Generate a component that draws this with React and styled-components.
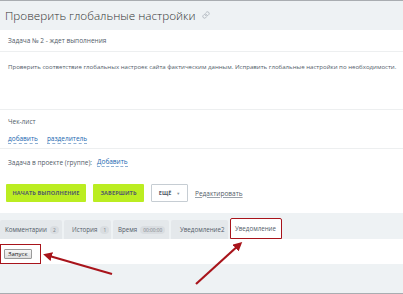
import React from "react";
import styled, { createGlobalStyle } from "styled-components";

const Global = createGlobalStyle`
  html, body { margin: 0; padding: 0; background: #fff; }
  body { font-family: "Open Sans", "Liberation Sans", sans-serif; color: #333; }
  * { box-sizing: border-box; }
`;

const Page = styled.div`
  position: relative;
  width: 403px;
  height: 294px;
  overflow: hidden;
  border-top: 1px solid #a9adb1;
  border-bottom: 1px solid #a9adb1;
  background: #eef2f4;
  display: flex;
  flex-direction: column;
`;

const Header = styled.div`
  height: 29px;
  display: flex;
  align-items: center;
  gap: 6px;
  padding: 0 0 2px 5px;
  background: #eef2f4;
`;

const Title = styled.h1`
  margin: 0;
  font-size: 11.7px;
  font-weight: 300;
  color: #333;
`;

const Card = styled.div`
  background: #fff;
  display: flex;
  flex-direction: column;
`;

const Row = styled.div`
  padding: ${(p) => p.$pad || "0 8px"};
  height: ${(p) => p.$h}px;
  border-bottom: ${(p) => (p.$noLine ? "none" : "1px solid #edeff0")};
  font-size: ${(p) => p.$fs || 6.5}px;
  color: #525c69;
  display: flex;
  flex-direction: column;
  justify-content: ${(p) => p.$justify || "center"};
  gap: ${(p) => p.$gap || 0}px;
  white-space: nowrap;
`;

const Line = styled.div`
  display: flex;
  align-items: center;
  gap: ${(p) => p.$gap || 4}px;
`;

const DashLink = styled.span`
  color: #2067b0;
  border-bottom: 1px dashed #8fb0d4;
  line-height: 8px;
`;

const Buttons = styled.div`
  height: 40px;
  padding: 0 6px;
  display: flex;
  align-items: center;
  gap: 7px;
  background: #fff;
`;

const GreenButton = styled.div`
  width: ${(p) => p.$w}px;
  height: 18px;
  background: #bbed21;
  color: #535c69;
  font-size: 5.6px;
  font-weight: 700;
  display: flex;
  align-items: center;
  justify-content: center;
  letter-spacing: 0.1px;
  border-radius: 1px;
`;

const MoreButton = styled.div`
  width: 37px;
  height: 18px;
  border: 1px solid #c6cdd3;
  color: #535c69;
  font-size: 5.6px;
  font-weight: 700;
  display: flex;
  align-items: center;
  justify-content: center;
  gap: 5px;
  border-radius: 1px;
`;

const Caret = styled.span`
  font-size: 4px;
  color: #8a9199;
`;

const EditLink = styled.span`
  font-size: 6.5px;
  color: #535c69;
  text-decoration: underline;
  text-decoration-color: #9aa2ab;
`;

const TabBar = styled.div`
  height: 26px;
  padding: 6px 0 0 0;
  display: flex;
  align-items: flex-end;
  gap: 2px;
  background: #eef2f4;
`;

const Tab = styled.div`
  height: ${(p) => (p.$active ? 21 : 19)}px;
  width: ${(p) => p.$w}px;
  padding: 0 0 0 ${(p) => p.$pl || 6}px;
  display: flex;
  align-items: center;
  gap: 3px;
  font-size: 6.2px;
  color: #535c69;
  background: ${(p) => (p.$active ? "#fff" : "#e4e8eb")};
  border: ${(p) => (p.$active ? "1.5px solid #a8141b" : "none")};
  border-radius: 2px 2px 0 0;
  white-space: nowrap;
`;

const Badge = styled.span`
  background: #d9dde1;
  color: #7a8188;
  font-size: 4.8px;
  border-radius: 5px;
  padding: 1px 3px;
  line-height: 6px;
`;

const TabBody = styled.div`
  height: 25px;
  background: #fff;
  display: flex;
  align-items: center;
`;

const Highlight = styled.div`
  width: 41px;
  height: 20px;
  margin-top: 4px;
  border: 1.5px solid #a8141b;
  display: flex;
  align-items: center;
  padding-left: 3px;
`;

const SmallButton = styled.div`
  height: 10px;
  padding: 0 3px;
  font-size: 6px;
  color: #222;
  background: linear-gradient(#f6f6f6, #dedede);
  border: 1px solid #9a9a9a;
  border-radius: 1px;
  display: flex;
  align-items: center;
`;

const Filler = styled.div`
  flex: 1;
  background: #eef2f4;
`;

const Arrows = styled.svg`
  position: absolute;
  left: 0;
  top: 0;
  pointer-events: none;
`;

const LinkIcon = () => (
  <svg width="8" height="8" viewBox="0 0 24 24" fill="none" stroke="#b3bac1" strokeWidth="3" strokeLinecap="round">
    <path d="M10 13a5 5 0 0 0 7.5.5l3-3a5 5 0 0 0-7-7l-1.7 1.7" />
    <path d="M14 11a5 5 0 0 0-7.5-.5l-3 3a5 5 0 0 0 7 7l1.7-1.7" />
  </svg>
);

export default function App() {
  return (
    <>
      <Global />
      <Page>
        <Header>
          <Title>Проверить глобальные настройки</Title>
          <LinkIcon />
        </Header>
        <Card>
          <Row $h={22}>Задача № 2 - ждет выполнения</Row>
          <Row $h={58} $justify="flex-start" $pad="10px 8px 0" $fs={6.1}>
            Проверить соответствие глобальных настроек сайта фактическим данным. Исправить глобальные настройки по необходимости.
          </Row>
          <Row $h={39} $justify="flex-start" $pad="7px 8px 0" $gap={9}>
            <span>Чек-лист</span>
            <Line $gap={9}>
              <DashLink>добавить</DashLink>
              <DashLink>разделитель</DashLink>
            </Line>
          </Row>
          <Row $h={24} $noLine $pad="3px 8px 0">
            <Line $gap={5}>
              <span>Задача в проекте (группе):</span>
              <DashLink>Добавить</DashLink>
            </Line>
          </Row>
          <Buttons>
            <GreenButton $w={80}>НАЧАТЬ ВЫПОЛНЕНИЕ</GreenButton>
            <GreenButton $w={51}>ЗАВЕРШИТЬ</GreenButton>
            <MoreButton>
              <span>ЕЩЁ</span>
              <Caret>▼</Caret>
            </MoreButton>
            <EditLink>Редактировать</EditLink>
          </Buttons>
        </Card>
        <TabBar>
          <Tab $w={62} $pl={5}>
            Комментарии <Badge>2</Badge>
          </Tab>
          <Tab $w={47} $pl={8}>
            История <Badge>1</Badge>
          </Tab>
          <Tab $w={56} $pl={5}>
            Время <Badge>00:00:00</Badge>
          </Tab>
          <Tab $w={57} $pl={9}>Уведомление2</Tab>
          <Tab $w={52} $pl={4} $active>Уведомление</Tab>
        </TabBar>
        <TabBody>
          <Highlight>
            <SmallButton>Запуск</SmallButton>
          </Highlight>
        </TabBody>
        <Filler />
        <Arrows width="403" height="294" viewBox="0 0 403 294">
          <defs>
            <marker id="ah" markerWidth="9" markerHeight="9" refX="6" refY="4.5" orient="auto" markerUnits="userSpaceOnUse">
              <path d="M0 0 L9 4.5 L0 9 Z" fill="#a8141b" />
            </marker>
          </defs>
          <line x1="112" y1="273" x2="46" y2="254" stroke="#a8141b" strokeWidth="2.2" markerEnd="url(#ah)" />
          <line x1="196" y1="283" x2="240" y2="243" stroke="#a8141b" strokeWidth="2.2" markerEnd="url(#ah)" />
        </Arrows>
      </Page>
    </>
  );
}
